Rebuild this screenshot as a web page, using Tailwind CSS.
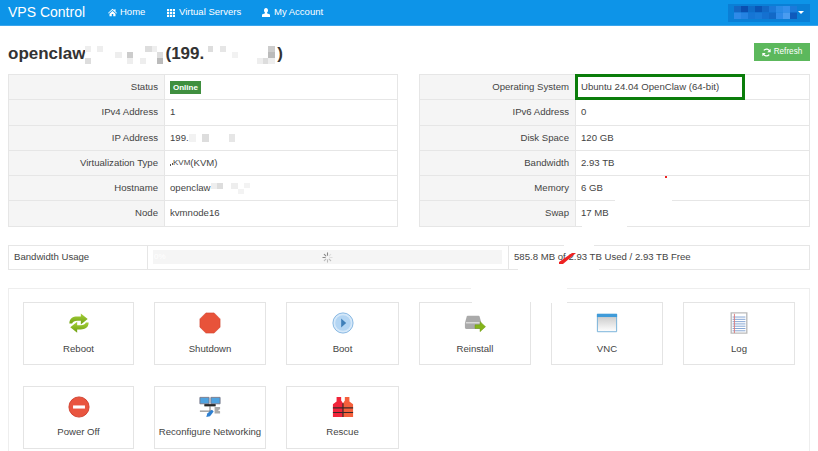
<!DOCTYPE html>
<html lang="en">
<head>
<meta charset="UTF-8" />
<title>VPS Control</title>
<script src="https://cdn.jsdelivr.net/npm/@tailwindcss/browser@4"></script>
</head>
<body class="relative h-[451px] w-[818px] overflow-hidden bg-white font-['Liberation_Sans',Arial,sans-serif] text-[9.6px] text-[#444]">

<!-- navbar -->
<nav class="flex h-[26px] items-center border-b border-[#3aa5ec] bg-[#0d94e8] pl-2 pr-2 text-white">
  <span class="w-[100px] text-[14px]">VPS Control</span>
  <a class="flex w-[59px] items-center gap-[3px] text-[9.5px]">
    <svg class="h-[9px] w-[9px]" viewBox="0 0 12 12" fill="#fff"><path d="M6 1 0 6.500l.7.8L6 2.600l5.300 4.700.7-.8-2-1.800V1.500H8.500v1.400zM2 7.500V11h3V8h2v3h3V7.500L6 4z"/></svg>
    Home
  </a>
  <a class="flex w-[95px] items-center gap-[4px] text-[9.5px]">
    <svg class="h-[8px] w-[8px]" viewBox="0 0 9 9" fill="#fff"><path d="M0 0h2.400v2.400H0zM3.300 0h2.400v2.400H3.300zM6.600 0H9v2.400H6.600zM0 3.300h2.400v2.400H0zM3.300 3.300h2.400v2.400H3.300zM6.600 3.300H9v2.400H6.600zM0 6.600h2.400V9H0zM3.300 6.600h2.400V9H3.300zM6.600 6.600H9V9H6.600z"/></svg>
    Virtual Servers
  </a>
  <a class="flex items-center gap-[4px] text-[9.5px]">
    <svg class="h-[9px] w-[8px]" viewBox="0 0 10 11" fill="#fff"><path d="M5 0C3.400 0 2.500 1.200 2.500 2.900c0 1.200.6 2.300 1.300 2.800v.8L0 8v3h10V8L6.200 6.500v-.8C6.900 5.200 7.500 4.100 7.500 2.900 7.500 1.200 6.600 0 5 0z"/></svg>
    My Account
  </a>
  <!-- account dropdown, name blurred out -->
  <div class="ml-auto flex h-[18px] w-[82px] items-center bg-[#0a7fd6] pl-[6px]">
    <svg class="h-[13px] w-[63px]" viewBox="0 0 54 12" preserveAspectRatio="none">
      <path fill="#1467c4" d="M0 0h6v6H0z"/>
      <path fill="#0a4fb0" d="M6 0h6v6H6z"/>
      <path fill="#0e6cc8" d="M12 0h6v6h-6z"/>
      <path fill="#0a55b5" d="M18 0h6v6h-6z"/>
      <path fill="#1268c6" d="M24 0h6v6h-6z"/>
      <path fill="#1b78d8" d="M30 0h6v6h-6z"/>
      <path fill="#2a8ae6" d="M36 0h6v6h-6z"/>
      <path fill="#348fec" d="M42 0h6v6h-6z"/>
      <path fill="#1c7ada" d="M48 0h6v6h-6z"/>
      <path fill="#2f8ae8" d="M0 6h6v6H0z"/>
      <path fill="#2583e2" d="M6 6h6v6H6z"/>
      <path fill="#1675d4" d="M12 6h6v6h-6z"/>
      <path fill="#1a7ad8" d="M18 6h6v6h-6z"/>
      <path fill="#1570d0" d="M24 6h6v6h-6z"/>
      <path fill="#1268c6" d="M30 6h6v6h-6z"/>
      <path fill="#2f8ae8" d="M36 6h6v6h-6z"/>
      <path fill="#4a9cf0" d="M42 6h6v6h-6z"/>
      <path fill="#0f5abc" d="M48 6h6v6h-6z"/>
    </svg>
    <span class="ml-[1px] h-0 w-0 border-x-[3px] border-t-[3px] border-x-transparent border-t-white"></span>
  </div>
</nav>

<main class="px-2">
  <!-- title row -->
  <div class="flex h-[48px] items-start justify-between pt-[17px]">
    <h1 class="flex items-center text-[17px] leading-[22px] font-bold text-[#333]">
      openclaw
      <svg class="h-[22px] w-[80px]" viewBox="0 0 80 22">
        <path fill="#eee" d="M0 3h6v6H0zM12 3h6v6h-6zM30 9h7v6h-7zM42 15h6v6h-6zM67 3h5v6h-5zM55 15h6v6h-6z"/>
        <path fill="#ddd" d="M0 15h6v6H0zM60 3h7v6h-7zM72 9h6v6h-6z"/>
        <path fill="#ccc" d="M42 9h6v6h-6z"/>
        <path fill="#bbb" d="M72 15h6v6h-6z"/>
      </svg>
      (199.
      <svg class="h-[22px] w-[73px]" viewBox="0 0 73 22">
        <path fill="#ddd" d="M4 3h5v6H4zM59 15h5v6h-5z"/>
        <path fill="#e6e6e6" d="M16 3h6v6h-6z"/>
        <path fill="#f2f2f2" d="M28 9h6v6h-6z"/>
        <path fill="#eee" d="M53 15h6v6h-6zM64 15h7v6h-7z"/>
        <path fill="#ccc" d="M64 3h7v6h-7z"/>
        <path fill="#bbb" d="M64 9h7v6h-7z"/>
      </svg>
      )
    </h1>
    <button class="flex h-[18px] w-[56px] items-center justify-center gap-[3px] bg-[#5cb85c] text-[8.2px] text-white">
      <svg class="h-[9px] w-[9px]" viewBox="0 0 12 12" fill="none" stroke="#fff" stroke-width="1.500"><path d="M10.500 5A4.600 4.600 0 0 0 2.400 3.200M1.500 7a4.600 4.600 0 0 0 8.100 1.800"/><path fill="#fff" stroke="none" d="M11.500 1v4.500H7zM.5 11V6.500H5z"/></svg>
      Refresh
    </button>
  </div>

  <!-- server details -->
  <div class="grid grid-cols-[390px_391px] justify-between">
    <table class="w-full table-fixed border-collapse border border-[#e6e6e6] [&_td]:h-[25.3px] [&_td]:border [&_td]:border-[#e6e6e6]">
      <tbody>
        <tr><td class="w-[156px] bg-[#f5f5f5] pr-[6px] text-right">Status</td><td class="pl-[5px]"><span class="inline-block bg-[#3f8f3f] px-[3px] align-middle text-[8px] leading-[13px] font-bold text-white">Online</span></td></tr>
        <tr><td class="bg-[#f5f5f5] pr-[6px] text-right">IPv4 Address</td><td class="pl-[5px]">1</td></tr>
        <tr><td class="bg-[#f5f5f5] pr-[6px] text-right">IP Address</td><td class="pl-[5px]"><span class="flex items-center">199.<svg class="h-[8px] w-[50px]" viewBox="0 0 50 8"><path fill="#f2f2f2" d="M0 0h7v8H0z"/><path fill="#ddd" d="M13 0h7v8h-7z"/><path fill="#e6e6e6" d="M40 0h6v8h-6z"/></svg></span></td></tr>
        <tr><td class="bg-[#f5f5f5] pr-[6px] text-right">Virtualization Type</td><td class="pl-[5px]"><span class="flex items-center"><svg class="h-[5px] w-[3px]" viewBox="0 0 3 5"><path fill="#555" d="M0 3h1v2H0zM2 2h1v2H2z"/></svg><span class="text-[8px]">KVM</span>(KVM)</span></td></tr>
        <tr><td class="bg-[#f5f5f5] pr-[6px] text-right">Hostname</td><td class="pl-[5px]"><span class="flex items-center">openclaw<svg class="h-[12px] w-[42px]" viewBox="0 0 42 12"><path fill="#eee" d="M0 1h6v6H0zM20 1h7v6h-7z"/><path fill="#ddd" d="M6 1h6v6H6z"/><path fill="#f3f3f3" d="M27 7h6v5h-6zM33 1h6v5h-6z"/></svg></span></td></tr>
        <tr><td class="bg-[#f5f5f5] pr-[6px] text-right">Node</td><td class="pl-[5px]">kvmnode16</td></tr>
      </tbody>
    </table>

    <table class="w-full table-fixed border-collapse border border-[#e6e6e6] [&_td]:h-[25.3px] [&_td]:border [&_td]:border-[#e6e6e6]">
      <tbody>
        <tr><td class="w-[156px] bg-[#f5f5f5] pr-[6px] text-right">Operating System</td><td class="relative pl-[5px]">Ubuntu 24.04 OpenClaw (64-bit)<span class="absolute top-[-1px] left-[-1px] h-[26px] w-[170px] border-[3px] border-[#0a7d0a]"></span></td></tr>
        <tr><td class="bg-[#f5f5f5] pr-[6px] text-right">IPv6 Address</td><td class="pl-[5px]">0</td></tr>
        <tr><td class="bg-[#f5f5f5] pr-[6px] text-right">Disk Space</td><td class="pl-[5px]">120 GB</td></tr>
        <tr><td class="bg-[#f5f5f5] pr-[6px] text-right">Bandwidth</td><td class="pl-[5px]">2.93 TB</td></tr>
        <tr><td class="bg-[#f5f5f5] pr-[6px] text-right">Memory</td><td class="pl-[5px]">6 GB</td></tr>
        <tr><td class="bg-[#f5f5f5] pr-[6px] text-right">Swap</td><td class="pl-[5px]">17 MB</td></tr>
      </tbody>
    </table>
  </div>

  <!-- bandwidth usage -->
  <div class="mt-[18px] flex h-[25px] items-center border border-[#e6e6e6]">
    <div class="flex h-full w-[139px] items-center border-r border-[#e6e6e6] pl-[5px]">Bandwidth Usage</div>
    <div class="flex h-full w-[361px] items-center border-r border-[#e6e6e6] pr-[6px] pl-[5px]">
      <div class="relative flex h-[14px] w-full items-center justify-center bg-[#f5f5f5]">
        <span class="absolute left-[1px] text-[8px] text-white">0%</span>
        <svg class="h-[11px] w-[11px]" viewBox="0 0 12 12" stroke-width="1.200" stroke-linecap="round">
          <path stroke="#888" d="M6 1v2.500M2.500 2.500l1.700 1.700M1 6h2.500"/>
          <path stroke="#bbb" d="M2.500 9.500l1.700-1.700M6 11V8.500M9.500 9.500 7.800 7.800"/>
          <path stroke="#ddd" d="M11 6H8.500M9.500 2.500 7.800 4.200"/>
        </svg>
      </div>
    </div>
    <div class="pl-[5px]">585.8 MB of 2.93 TB Used / 2.93 TB Free</div>
  </div>

  <!-- actions -->
  <div class="mt-[18px] grid h-[163px] grid-cols-[111px_112px_113px_112px_112px_112px] content-start gap-x-[20px] gap-y-[21px] border border-b-0 border-[#eee] pt-[13px] pl-[14px]">
    <a class="flex h-[63px] flex-col items-center border border-[#e4e4e4] pt-[9px]">
      <svg class="h-[22px] w-[22px]" viewBox="0 0 24 24"><defs><linearGradient id="rb" x1="0" y1="0" x2="0" y2="1"><stop offset="0" stop-color="#a8d23a"/><stop offset="1" stop-color="#6ea012"/></linearGradient></defs><path fill="url(#rb)" d="M1.500 12.500C1.500 7 5.500 5 10 5h4V1.500l7.500 6L14 13.500V9.500h-4c-3 0-4.500 1-5.500 3z"/><path fill="url(#rb)" d="M22.500 11.500c0 5.500-4 7.500-8.500 7.500h-4v3.500l-7.500-6 7.500-6v4h4c3 0 4.500-1 5.500-3z"/></svg>
      <span class="mt-[8px]">Reboot</span>
    </a>
    <a class="flex h-[63px] flex-col items-center border border-[#e4e4e4] pt-[9px]">
      <svg class="h-[22px] w-[22px]" viewBox="0 0 24 24"><path fill="#e8533a" stroke="#d0402c" stroke-width=".6" d="M7.500 1h9l6.500 6.500v9L16.500 23h-9L1 16.500v-9z"/></svg>
      <span class="mt-[8px]">Shutdown</span>
    </a>
    <a class="flex h-[63px] flex-col items-center border border-[#e4e4e4] pt-[9px]">
      <svg class="h-[22px] w-[22px]" viewBox="0 0 24 24"><circle cx="12" cy="12" r="11" fill="#d5e8f9" stroke="#7fb2df"/><circle cx="12" cy="12" r="8.500" fill="#b3d5f3"/><path fill="#3f7fb8" d="M10 7 15.500 12 10 17z"/></svg>
      <span class="mt-[8px]">Boot</span>
    </a>
    <a class="flex h-[63px] flex-col items-center border border-[#e4e4e4] pt-[9px]">
      <svg class="h-[22px] w-[22px]" viewBox="0 0 24 24"><path fill="#aaa" d="M1 12l2-7c.2-.6.6-1 1.500-1h11c.9 0 1.300.4 1.500 1l2 7v5c0 1-.5 1.500-1.500 1.500h-15C1.500 18.500 1 18 1 17z"/><path fill="#ddd" d="M2 11h16v1.500H2z"/><path fill="#84b41a" stroke="#6f9a14" stroke-width=".5" d="M12 14h5.500v-3.500l6 5.500-6 5.500V18H12z"/></svg>
      <span class="mt-[8px]">Reinstall</span>
    </a>
    <a class="flex h-[63px] flex-col items-center border border-[#e4e4e4] pt-[9px]">
      <svg class="h-[22px] w-[22px]" viewBox="0 0 24 24"><defs><linearGradient id="vnc" x1="0" y1="0" x2="0" y2="1"><stop offset="0" stop-color="#c4c4c4"/><stop offset="1" stop-color="#fff"/></linearGradient></defs><path fill="url(#vnc)" stroke="#6fadd6" d="M1.500 2.500h21v19h-21z"/><path fill="#3f9bd9" d="M1 2h22v3.500H1z"/></svg>
      <span class="mt-[8px]">VNC</span>
    </a>
    <a class="flex h-[63px] flex-col items-center border border-[#e4e4e4] pt-[9px]">
      <svg class="h-[22px] w-[22px]" viewBox="0 0 24 24"><path fill="#fff" stroke="#bbb" stroke-width="1.500" d="M3.500 1h17v22h-17z"/><path stroke="#7c9fd0" d="M5 5.500h14M5 8h14M5 10.500h14M5 13h14M5 15.500h14M5 18h14M5 20.500h14"/><path stroke="#d77" d="M7 2v21"/></svg>
      <span class="mt-[8px]">Log</span>
    </a>
    <a class="flex h-[63px] flex-col items-center border border-[#e4e4e4] pt-[9px]">
      <svg class="h-[22px] w-[22px]" viewBox="0 0 24 24"><circle cx="12" cy="12" r="11" fill="#e9553f" stroke="#cf3d2c"/><path fill="#fff" d="M5.500 10.300h13v3.400h-13z"/></svg>
      <span class="mt-[7px]">Power Off</span>
    </a>
    <a class="flex h-[63px] flex-col items-center border border-[#e4e4e4] pt-[9px]">
      <svg class="h-[22px] w-[22px]" viewBox="0 0 24 24"><path fill="#4fa3e0" stroke="#778" stroke-width="1" d="M1 1.500h10v7H1zM13 1.500h10v7H13z"/><path stroke="#666" d="M6 9v2h12V9M12 11v7M1 16.500h14"/><path fill="#aaa" d="M17 12h6v2.500l-2.500 1 2.500 1V19h-6z"/><path fill="#2e7fd0" d="M8 23l1-4 5-4 2 2-4 5z"/></svg>
      <span class="mt-[7px]">Reconfigure Networking</span>
    </a>
    <a class="flex h-[63px] flex-col items-center border border-[#e4e4e4] pt-[9px]">
      <svg class="h-[22px] w-[22px]" viewBox="0 0 24 24"><path fill="#f0243a" d="M5 1h5v4l2 3v15H1V9l4-3z"/><path fill="#f5603c" d="M19 1h-5v4l-2 3v15h11V9l-4-3z"/><path stroke="#3a2a2a" stroke-width="1.300" d="M1 13h22M1 18h22M12 8v15"/></svg>
      <span class="mt-[7px]">Rescue</span>
    </a>
  </div>
</main>

<!-- white scribble and red marks left on top of the screenshot -->
<svg class="pointer-events-none absolute top-0 left-0 h-[451px] w-[818px]" viewBox="0 0 818 451">
  <path fill="#fff" d="M615 198h57v4h-57zM582 224h45v4h-45zM564 243h30v4h-30zM518 268h81v4h-81zM471 287h96v3h-96zM472 301h58v2h-58zM551 301h16v2h-16z"/>
  <path fill="#e22" d="M559 262l13-9h4l-13 11h-4zM665 176h2v2h-2z"/>
</svg>
</body>
</html>
